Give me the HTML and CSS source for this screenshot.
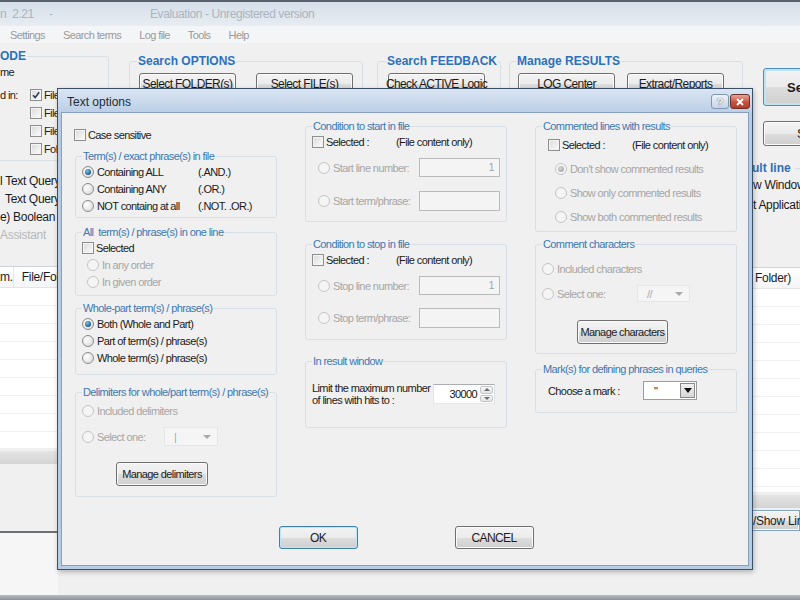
FILE: index.html
```html
<!DOCTYPE html>
<html lang="en">
<head>
  <meta charset="UTF-8">
  <meta name="viewport" content="width=device-width, initial-scale=1.0">
  <title>Text options</title>
  <link rel="stylesheet" href="styles.css">
</head>

<body>
  <!-- main window behind the dialog -->
  <div class="app">
    <div class="app-title">
      <span class="app-name">n&nbsp; 2.21</span>
      <span class="app-dash">-</span>
      <span>Evaluation - Unregistered version</span>
    </div>

    <div class="menubar">
      <span>Settings</span>
      <span>Search terms</span>
      <span>Log file</span>
      <span>Tools</span>
      <span>Help</span>
    </div>

    <div class="toolbar">
      <fieldset class="tb-grp tb-mode">
        <legend>ODE</legend>
        <div class="mode-name">me</div>
        <div class="mode-in">
          <span class="mode-lbl">d in:</span>
          <div class="mode-checks">
            <div class="mode-row"><span class="chk on"><svg viewBox="0 0 10 10"><path d="M2 5.2 L4.2 7.5 L8.2 2.2" fill="none" stroke="#2b3d57" stroke-width="1.6"/></svg></span>File</div>
            <div class="mode-row"><span class="chk"></span>File</div>
            <div class="mode-row"><span class="chk"></span>File</div>
            <div class="mode-row"><span class="chk"></span>Fold</div>
          </div>
        </div>
      </fieldset>

      <fieldset class="tb-grp tb-opts">
        <legend>Search OPTIONS</legend>
        <div class="tb-btns">
          <span class="btn tb-btn">Select FOLDER(s)</span>
          <span class="btn tb-btn">Select FILE(s)</span>
        </div>
      </fieldset>

      <fieldset class="tb-grp tb-feed">
        <legend>Search FEEDBACK</legend>
        <div class="tb-btns">
          <span class="btn tb-btn">Check ACTIVE Logic</span>
        </div>
      </fieldset>

      <fieldset class="tb-grp tb-res">
        <legend>Manage RESULTS</legend>
        <div class="tb-btns">
          <span class="btn tb-btn">LOG Center</span>
          <span class="btn tb-btn">Extract/Reports</span>
        </div>
      </fieldset>

      <div class="tb-right">
        <span class="btn big-btn">Search</span>
        <span class="btn small-btn">S</span>
      </div>
    </div>

    <div class="workspace">
      <div class="side-left">
        <div class="query">
          <div>l Text Query :</div>
          <div class="q-indent">Text Query :</div>
          <div>e) Boolean Te</div>
          <div class="q-dis">Assistant</div>
        </div>
        <div class="list list-left">
          <div class="list-head"><span class="col-num">m.</span><span>File/Fol</span></div>
          <div class="list-row"></div>
          <div class="list-row"></div>
          <div class="list-row"></div>
          <div class="list-row"></div>
          <div class="list-row"></div>
          <div class="list-row"></div>
          <div class="list-row"></div>
          <div class="list-row"></div>
          <div class="list-row"></div>
        </div>
        <div class="hscroll"></div>
        <div class="left-foot"></div>
      </div>

      <div></div>

      <div class="side-right">
        <div class="res-head"><span>ult line</span><span class="res-line"></span></div>
        <div class="res-opt">w Window</div>
        <div class="res-opt">t Application</div>
        <div class="list list-right">
          <div class="list-head"><span>Folder)</span></div>
          <div class="list-row"></div>
          <div class="list-row"></div>
          <div class="list-row"></div>
          <div class="list-row"></div>
          <div class="list-row"></div>
          <div class="list-row"></div>
          <div class="list-row"></div>
          <div class="list-row"></div>
          <div class="list-row"></div>
          <div class="list-row"></div>
          <div class="list-row"></div>
        </div>
        <div class="hscroll"></div>
        <span class="btn show-btn">/Show Lin</span>
      </div>
    </div>
    <div class="statusbar"></div>
  </div>

  <!-- Text options dialog -->
  <div class="dialog">
    <div class="dlg-title">
      <span class="dlg-caption">Text options</span>
      <span class="cap-btn cap-help">?</span>
      <span class="cap-btn cap-close">
        <svg viewBox="0 0 10 8"><path d="M2 1 L8 7 M8 1 L2 7" stroke="#fff" stroke-width="1.8"/></svg>
      </span>
    </div>

    <div class="dlg-body">
      <div class="dlg-cols">
        <!-- left column -->
        <div class="col">
          <div class="opt case"><span class="chk"></span>Case sensitive</div>

          <fieldset class="grp g-terms">
            <legend>Term(s) / exact phrase(s) in file</legend>
            <div class="opt"><span class="rad on"></span><span class="opt-name">Containing ALL</span>(.AND.)</div>
            <div class="opt"><span class="rad"></span><span class="opt-name">Containing ANY</span>(.OR.)</div>
            <div class="opt"><span class="rad"></span><span class="opt-name">NOT containg at all</span>(.NOT. .OR.)</div>
          </fieldset>

          <fieldset class="grp g-line">
            <legend>All&nbsp; term(s) / phrase(s) in one line</legend>
            <div class="opt"><span class="chk"></span>Selected</div>
            <div class="opt dis sub"><span class="rad dis"></span>In any order</div>
            <div class="opt dis sub"><span class="rad dis"></span>In given order</div>
          </fieldset>

          <fieldset class="grp g-whole">
            <legend>Whole-part term(s) / phrase(s)</legend>
            <div class="opt"><span class="rad on"></span>Both (Whole and Part)</div>
            <div class="opt"><span class="rad"></span>Part of term(s) / phrase(s)</div>
            <div class="opt"><span class="rad"></span>Whole term(s) / phrase(s)</div>
          </fieldset>

          <fieldset class="grp g-delim">
            <legend>Delimiters for whole/part term(s) / phrase(s)</legend>
            <div class="opt dis row-inc"><span class="rad dis"></span>Included delimiters</div>
            <div class="opt dis row-sel">
              <span class="rad dis"></span><span class="sel-lbl">Select one:</span>
              <span class="combo dis"><span class="combo-val">|</span><span class="combo-arrow"></span></span>
            </div>
            <span class="btn manage-btn">Manage delimiters</span>
          </fieldset>
        </div>

        <!-- middle column -->
        <div class="col">
          <fieldset class="grp g-start">
            <legend>Condition to start in file</legend>
            <div class="opt"><span class="chk"></span><span class="sel-name">Selected :</span>(File content only)</div>
            <div class="field-row first">
              <span class="rad dis"></span><span class="field-lbl">Start line number:</span>
              <span class="tbox">1</span>
            </div>
            <div class="field-row second">
              <span class="rad dis"></span><span class="field-lbl">Start term/phrase:</span>
              <span class="tbox"></span>
            </div>
          </fieldset>

          <fieldset class="grp g-stop">
            <legend>Condition to stop in file</legend>
            <div class="opt"><span class="chk"></span><span class="sel-name">Selected :</span>(File content only)</div>
            <div class="field-row first">
              <span class="rad dis"></span><span class="field-lbl">Stop line number:</span>
              <span class="tbox">1</span>
            </div>
            <div class="field-row second">
              <span class="rad dis"></span><span class="field-lbl">Stop term/phrase:</span>
              <span class="tbox"></span>
            </div>
          </fieldset>

          <fieldset class="grp g-result">
            <legend>In result window</legend>
            <div class="limit-row">
              <span class="limit-lbl">Limit the maximum number<br>of lines with hits to :</span>
              <span class="spin">
                <span class="spin-val">30000</span>
                <span class="spin-btns"><span class="spin-up"></span><span class="spin-dn"></span></span>
              </span>
            </div>
          </fieldset>
        </div>

        <!-- right column -->
        <div class="col">
          <fieldset class="grp g-comm">
            <legend>Commented lines with results</legend>
            <div class="opt comm-sel"><span class="chk"></span><span class="sel-name">Selected :</span>(File content only)</div>
            <div class="opt dis comm-opt"><span class="rad dis on"></span>Don't show commented results</div>
            <div class="opt dis comm-opt"><span class="rad dis"></span>Show only commented results</div>
            <div class="opt dis comm-opt"><span class="rad dis"></span>Show both commented results</div>
          </fieldset>

          <fieldset class="grp g-chars">
            <legend>Comment characters</legend>
            <div class="opt dis chars-inc"><span class="rad dis"></span>Included characters</div>
            <div class="opt dis chars-sel">
              <span class="rad dis"></span><span class="sel-lbl wide">Select one:</span>
              <span class="combo dis"><span class="combo-val">//</span><span class="combo-arrow"></span></span>
            </div>
            <span class="btn manage-btn chars-btn">Manage characters</span>
          </fieldset>

          <fieldset class="grp g-mark">
            <legend>Mark(s) for defining phrases in queries</legend>
            <div class="opt mark-row">
              <span class="mark-lbl">Choose a mark :</span>
              <span class="combo on"><span class="combo-val">"</span><span class="combo-btn"></span></span>
            </div>
          </fieldset>
        </div>
      </div>

      <div class="dlg-foot">
        <span class="btn foot-btn ok-btn">OK</span>
        <span class="btn foot-btn">CANCEL</span>
      </div>
    </div>
  </div>
</body>
</html>
```

FILE: styles.css
```css
* {
  margin: 0;
  padding: 0;
  box-sizing: border-box;
}

body {
  width: 800px;
  height: 600px;
  overflow: hidden;
  position: relative;
  font-family: "Liberation Sans", Arial, sans-serif;
  font-size: 11px;
  letter-spacing: -0.6px;
  color: #1b1b1b;
  background: #f0f0f0;
}

/* ---------- shared controls ---------- */

.chk {
  width: 12px;
  height: 12px;
  flex-shrink: 0;
  margin-right: 2px;
  border: 1px solid #8e8f8f;
  background: linear-gradient(135deg, #d9d9d9, #fdfdfd);
  box-shadow: inset 0 0 0 1px #f4f4f4;
  display: flex;
}

.chk svg {
  width: 10px;
  height: 10px;
}

.rad {
  width: 12px;
  height: 12px;
  flex-shrink: 0;
  margin-right: 3px;
  border-radius: 50%;
  border: 1px solid #8a8a8a;
  background: radial-gradient(circle at 35% 35%, #ffffff, #d5d5d5);
  position: relative;
}

.rad.on::after {
  content: "";
  position: absolute;
  inset: 2px;
  border-radius: 50%;
  background: radial-gradient(circle at 40% 35%, #7cc3ec, #1b4f86 75%);
}

.rad.dis {
  border-color: #c4c4c4;
  background: #f5f5f5;
}

.rad.dis.on::after {
  background: radial-gradient(circle at 40% 35%, #d6d6d6, #a8a8a8 75%);
}

.btn {
  display: flex;
  align-items: center;
  justify-content: center;
  border: 1px solid #707070;
  border-radius: 3px;
  background: linear-gradient(#f3f3f3 0%, #ebebeb 50%, #dddddd 51%, #cfcfcf 100%);
  box-shadow: inset 0 0 0 1px #fbfbfb;
  color: #1b1b1b;
  white-space: nowrap;
}

/* ---------- main window ---------- */

.app {
  height: 600px;
  display: flex;
  flex-direction: column;
}

.app-title {
  height: 26px;
  flex-shrink: 0;
  border-top: 2px solid #59626c;
  background: linear-gradient(#d6dfe9, #e7ecf2);
  display: flex;
  align-items: center;
  font-size: 12px;
  letter-spacing: -0.4px;
  color: #aab4bf;
}

.app-name {
  width: 49px;
}

.app-dash {
  width: 101px;
}

.menubar {
  height: 17px;
  flex-shrink: 0;
  display: flex;
  align-items: center;
  gap: 18px;
  padding-left: 10px;
  background: #f4f5f7;
  color: #9a9a9a;
}

.toolbar {
  height: 118px;
  flex-shrink: 0;
  display: flex;
  align-items: flex-start;
  overflow: hidden;
}

.tb-grp {
  flex-shrink: 0;
  border: 1px solid #d7dfe6;
  border-radius: 3px;
  padding: 0 8px;
  height: 130px;
}

.tb-grp legend {
  margin-left: -2px;
  padding: 0 1px;
  font-weight: bold;
  font-size: 12px;
  letter-spacing: 0;
  line-height: 13px;
  white-space: nowrap;
  color: #2d70bd;
}

.tb-mode {
  width: 109px;
  height: 111px;
  margin-top: 7px;
  border-left: none;
  border-radius: 0 3px 3px 0;
  padding: 0;
}

.tb-mode legend {
  margin-left: 0;
  padding: 0 1px 0 0;
}

.mode-name {
  margin-top: 2px;
  height: 14px;
  line-height: 14px;
}

.mode-in {
  margin-top: 7px;
  display: flex;
  align-items: flex-start;
}

.mode-lbl {
  width: 30px;
  height: 18px;
  line-height: 18px;
}

.mode-row {
  height: 18px;
  display: flex;
  align-items: center;
}

.mode-row .chk {
  margin-right: 2px;
}

.tb-opts {
  width: 234px;
  margin: 12px 0 0 20px;
  padding-left: 9px;
}

.tb-feed {
  width: 124px;
  margin: 12px 0 0 14px;
  padding: 0 0 0 10px;
}

.tb-res {
  width: 234px;
  margin: 12px 0 0 8px;
}

.tb-btns {
  display: flex;
  gap: 20px;
  margin-top: 5px;
}

.tb-res .tb-btns {
  gap: 12px;
}

.tb-btn {
  width: 97px;
  height: 22px;
  font-size: 12px;
}

.tb-right {
  flex-shrink: 0;
  margin-left: 20px;
  display: flex;
  flex-direction: column;
}

.big-btn {
  width: 100px;
  height: 38px;
  margin-top: 25px;
  justify-content: flex-start;
  padding-left: 23px;
  border-color: #4c8fbf;
  box-shadow: inset 0 0 0 2px #bfe3f6;
  font-weight: bold;
  font-size: 13px;
  letter-spacing: 0;
}

.small-btn {
  width: 100px;
  height: 25px;
  margin-top: 15px;
  justify-content: flex-start;
  padding-left: 33px;
  font-size: 13px;
}

.workspace {
  flex: 1;
  display: grid;
  grid-template-columns: 58px 1fr 48px;
  overflow: hidden;
}

.side-left,
.side-right {
  display: flex;
  flex-direction: column;
  white-space: nowrap;
  overflow: hidden;
  font-size: 12px;
  letter-spacing: -0.3px;
}

.query {
  margin-top: 11px;
}

.query div {
  height: 18px;
  line-height: 18px;
}

.query .q-indent {
  padding-left: 5px;
}

.query .q-dis {
  color: #b8b8b8;
}

.list {
  background: #fff;
  border-top: 1px solid #cfd3d8;
  overflow: hidden;
}

.list-left {
  margin-top: 22px;
  height: 182px;
}

.list-right {
  margin-top: 52px;
  height: 225px;
}

.list-head {
  height: 21px;
  display: flex;
  align-items: center;
  background: linear-gradient(#ffffff, #f4f5f7);
  border-bottom: 1px solid #e2e4e7;
}

.list-right .list-head {
  padding-left: 3px;
}

.col-num {
  width: 14px;
  margin-right: 8px;
  border-right: 1px solid #e2e4e7;
  height: 21px;
  line-height: 21px;
}

.list-row {
  height: 18px;
  border-bottom: 1px solid #eff1f3;
}

.hscroll {
  height: 13px;
  margin-top: 3px;
  background: linear-gradient(#e4e4e4, #d4d4d4);
}

.left-foot {
  margin-top: 67px;
  border-top: 2px solid #6e7174;
  flex: 1;
  background: #f6f6f6;
}

.res-head {
  display: flex;
  align-items: center;
  height: 14px;
  font-weight: bold;
  letter-spacing: 0;
  color: #2d70bd;
}

.res-line {
  flex: 1;
  margin-left: 4px;
  border-top: 1px solid #d7dfe6;
}

.res-opt {
  height: 19px;
  line-height: 19px;
  margin-top: 1px;
  padding-left: 1px;
}

.res-opt:first-of-type {
  margin-top: 6px;
}

.show-btn {
  height: 21px;
  margin-top: 2px;
  justify-content: flex-start;
  padding-left: 1px;
  border-color: #7fa2c6;
  border-left: none;
  border-radius: 0;
}

.statusbar {
  height: 5px;
  flex-shrink: 0;
  background: linear-gradient(#b7bcc1, #8c9298);
}

/* ---------- dialog ---------- */

.dialog {
  position: absolute;
  left: 57px;
  top: 88px;
  width: 696px;
  height: 482px;
  border: 1px solid #3b4f66;
  background: #b7cbe3;
  display: flex;
  flex-direction: column;
  box-shadow: 1px 2px 5px rgba(0, 0, 0, 0.25);
}

.dlg-title {
  height: 23px;
  flex-shrink: 0;
  display: flex;
  align-items: center;
  padding: 2px 2px 0 9px;
  background: linear-gradient(#dae5f2, #bccfe7);
}

.dlg-caption {
  flex: 1;
  font-size: 12px;
  letter-spacing: 0;
  color: #1e2a38;
}

.cap-btn {
  height: 15px;
  display: flex;
  align-items: center;
  justify-content: center;
  border-radius: 3px;
}

.cap-help {
  width: 18px;
  margin-right: 1px;
  border: 1px solid #8196b0;
  background: linear-gradient(#eef3f9, #c6d5e8);
  color: #fff;
  font-weight: bold;
  font-size: 11px;
  letter-spacing: 0;
  text-shadow: 0 0 1px #4e6685, 0 0 1px #4e6685;
}

.cap-close {
  width: 20px;
  border: 1px solid #6b3129;
  background: linear-gradient(#e7a596, #c6543f 55%, #b43d2a);
}

.cap-close svg {
  width: 10px;
  height: 8px;
}

.dlg-body {
  flex: 1;
  margin: 0 3px 3px;
  border: 1px solid #889fbb;
  background: #f0f0f0;
  padding: 7px 11px 16px 13px;
  display: flex;
  flex-direction: column;
}

.dlg-cols {
  display: grid;
  grid-template-columns: repeat(3, 202px);
  column-gap: 28px;
  align-items: start;
}

.col {
  display: flex;
  flex-direction: column;
}

.grp {
  min-width: 0;
  border: 1px solid #d5dfe5;
  border-radius: 3px;
  padding: 0 6px 3px;
}

.grp legend {
  padding: 0 1px;
  line-height: 13px;
  white-space: nowrap;
  color: #3d78b3;
}

.opt {
  height: 17px;
  display: flex;
  align-items: center;
  white-space: nowrap;
}

.opt.dis {
  color: #a6a6a6;
}

.opt-name {
  width: 101px;
}

.sel-name {
  width: 70px;
}

.case {
  height: 13px;
  margin: 8px 0 0 -1px;
}

.g-terms {
  margin-top: 9px;
  padding-bottom: 3px;
}

.g-line {
  margin-top: 8px;
  padding-bottom: 5px;
}

.opt.sub {
  padding-left: 5px;
}

.g-whole {
  margin-top: 6px;
  padding-bottom: 8px;
}

.g-delim {
  margin-top: 11px;
  padding-bottom: 10px;
}

.row-inc {
  height: 18px;
  margin-top: 3px;
}

.row-sel {
  height: 19px;
  margin-top: 7px;
}

.sel-lbl {
  width: 67px;
}

.sel-lbl.wide {
  width: 80px;
}

.combo {
  height: 19px;
  width: 54px;
  display: flex;
  align-items: center;
  position: relative;
}

.combo.dis {
  background: #f5f5f5;
  border: 1px solid #e6e6e6;
  color: #a8a8a8;
}

.combo-val {
  flex: 1;
  padding-left: 9px;
}

.combo-arrow {
  width: 0;
  height: 0;
  margin-right: 6px;
  border-left: 4px solid transparent;
  border-right: 4px solid transparent;
  border-top: 4px solid #a9a9a9;
}

.combo.on {
  background: #fff;
  border: 1px solid #9c9c9c;
  padding: 1px;
  color: #222;
}

.combo-btn {
  width: 15px;
  height: 15px;
  border: 1px solid #8a8a8a;
  background: linear-gradient(#f2f2f2, #d6d6d6);
  display: flex;
  align-items: center;
  justify-content: center;
}

.combo-btn::after {
  content: "";
  border-left: 4px solid transparent;
  border-right: 4px solid transparent;
  border-top: 5px solid #111;
}

.manage-btn {
  width: 92px;
  height: 24px;
  margin: 16px 0 0 34px;
}

.g-start {
  padding-bottom: 10px;
}

.g-stop {
  margin-top: 16px;
  padding-bottom: 11px;
}

.field-row {
  display: flex;
  align-items: center;
  padding-left: 6px;
  color: #a6a6a6;
  white-space: nowrap;
}

.field-row.first {
  margin-top: 8px;
}

.field-row.second {
  margin-top: 14px;
}

.g-stop .field-row.second {
  margin-top: 13px;
}

.field-lbl {
  width: 87px;
}

.tbox {
  width: 81px;
  height: 19px;
  border: 1px solid #bababa;
  background: #f4f4f4;
  text-align: right;
  padding-right: 5px;
  line-height: 17px;
}

.field-row.second .tbox {
  height: 20px;
}

.g-result {
  margin-top: 15px;
  padding-bottom: 21px;
}

.limit-row {
  margin-top: 14px;
  display: flex;
  align-items: center;
}

.limit-lbl {
  width: 121px;
  line-height: 12px;
}

.spin {
  width: 62px;
  height: 20px;
  display: flex;
  border: 1px solid #abadb3;
  border-color: #abadb3 #dbdfe6 #e3e9ef #e2e3ea;
  background: #fff;
  padding: 1px;
}

.spin-val {
  flex: 1;
  text-align: right;
  padding-right: 3px;
  line-height: 16px;
  color: #111;
}

.spin-btns {
  width: 13px;
  display: flex;
  flex-direction: column;
  gap: 1px;
}

.spin-up,
.spin-dn {
  flex: 1;
  border: 1px solid #c6c6c6;
  border-radius: 2px;
  background: linear-gradient(#f7f7f7, #e3e3e3);
  display: flex;
  align-items: center;
  justify-content: center;
}

.spin-up::after {
  content: "";
  border-left: 3px solid transparent;
  border-right: 3px solid transparent;
  border-bottom: 3px solid #6c6c6c;
}

.spin-dn::after {
  content: "";
  border-left: 3px solid transparent;
  border-right: 3px solid transparent;
  border-top: 3px solid #6c6c6c;
}

.g-comm {
  padding-bottom: 6px;
}

.comm-sel {
  margin: 3px 0 0 6px;
}

.comm-opt {
  margin: 7px 0 0 13px;
}

.g-chars {
  margin-top: 6px;
  padding-bottom: 9px;
}

.chars-inc {
  height: 18px;
  margin-top: 9px;
}

.chars-sel {
  margin-top: 7px;
}

.chars-sel .combo {
  height: 17px;
  width: 53px;
}

.chars-btn {
  width: 91px;
  margin: 18px 0 0 35px;
}

.g-mark {
  margin-top: 9px;
  padding-bottom: 12px;
}

.mark-row {
  height: 19px;
  margin: 5px 0 0 6px;
}

.mark-lbl {
  width: 95px;
}

.dlg-foot {
  margin-top: auto;
  display: flex;
  justify-content: center;
  gap: 97px;
}

.foot-btn {
  width: 79px;
  height: 23px;
  font-size: 12px;
}

.ok-btn {
  border-color: #3c7fb1;
  box-shadow: inset 0 0 0 1px #bce5fa;
}
```
